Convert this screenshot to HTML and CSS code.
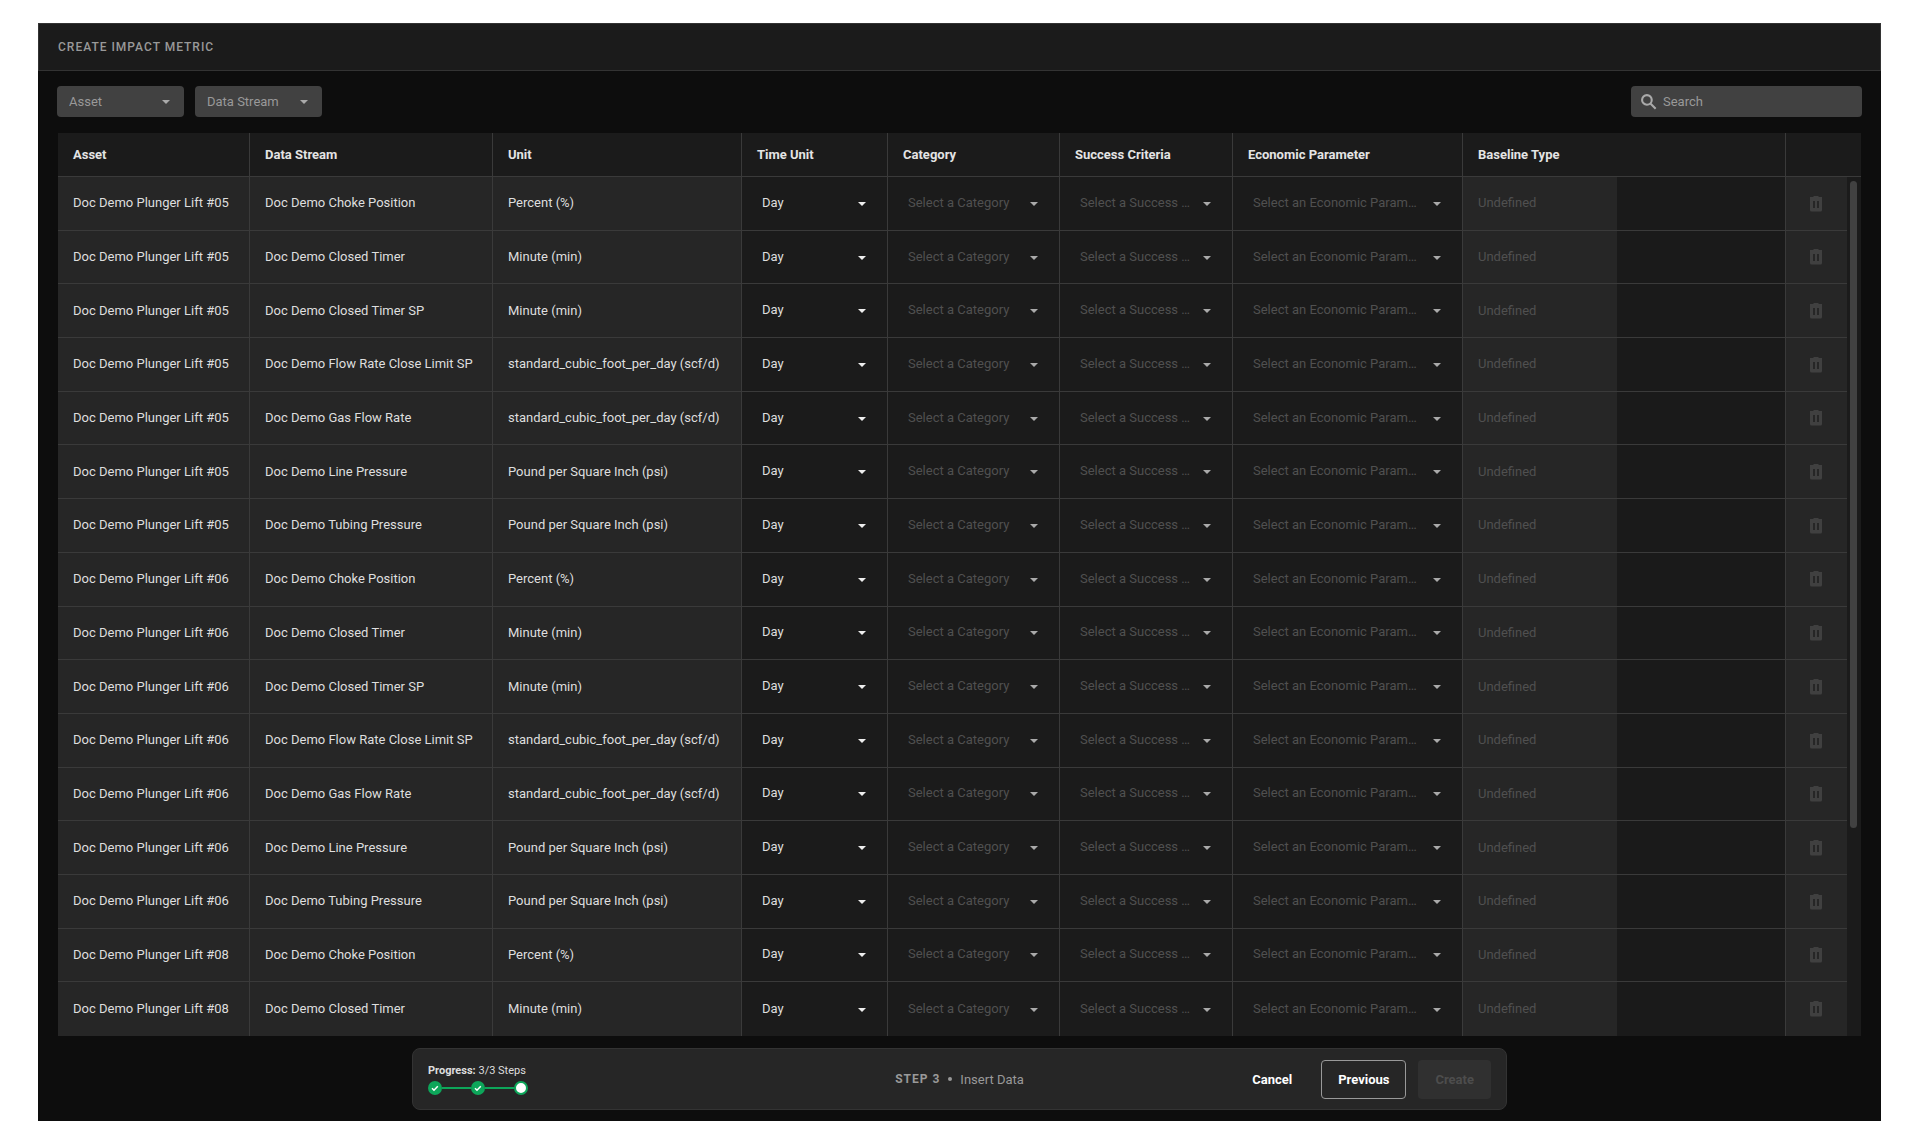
FILE: index.html
```html
<!DOCTYPE html>
<html lang="en">
<head>
    <meta charset="UTF-8">
    <meta name="viewport" content="width=device-width, initial-scale=1.0">
    <title>Create Impact Metric</title>
    <link rel="stylesheet" href="styles.css">
</head>
<body>
    <div class="page">
        <header class="page-header">
            <h1>Create Impact Metric</h1>
        </header>
        <main class="content">
            <div class="toolbar">
                <select class="filter" aria-label="Asset filter">
                    <option>Asset</option>
                </select>
                <select class="filter" aria-label="Data Stream filter">
                    <option>Data Stream</option>
                </select>
                <label class="search">
                    <svg viewBox="0 0 24 24" width="20" height="20" aria-hidden="true">
                        <path fill="none" stroke="currentColor" stroke-width="2.5" d="M9.500 3.700a5.800 5.800 0 1 0 0 11.600 5.800 5.800 0 1 0 0-11.600M14 14l6 6"/>
                    </svg>
                    <input type="text" placeholder="Search" aria-label="Search">
                </label>
            </div>
            <div class="table-wrapper">
                <table>
                    <colgroup>
                        <col class="col-asset">
                        <col class="col-stream">
                        <col class="col-unit">
                        <col class="col-time">
                        <col class="col-category">
                        <col class="col-success">
                        <col class="col-economic">
                        <col class="col-baseline">
                        <col class="col-value">
                        <col class="col-delete">
                    </colgroup>
                    <thead>
                        <tr>
                            <th>Asset</th>
                            <th>Data Stream</th>
                            <th>Unit</th>
                            <th>Time Unit</th>
                            <th>Category</th>
                            <th>Success Criteria</th>
                            <th>Economic Parameter</th>
                            <th colspan="2">Baseline Type</th>
                            <th></th>
                        </tr>
                    </thead>
                    <tbody id="metricRows"></tbody>
                </table>
                <div class="scroll-gutter">
                    <div class="scroll-head"></div>
                    <div class="scroll-track">
                        <div class="scroll-thumb"></div>
                    </div>
                </div>
            </div>
        </main>
        <footer class="wizard">
            <div class="progress">
                <div><strong>Progress:</strong> 3/3 Steps</div>
                <div class="steps">
                    <span class="step"><svg viewBox="0 0 14 14" width="14" height="14"><path d="M4 7.2l2 2 3.8-4" fill="none" stroke="#fff" stroke-width="1.5"/></svg></span>
                    <span class="line"></span>
                    <span class="step"><svg viewBox="0 0 14 14" width="14" height="14"><path d="M4 7.2l2 2 3.8-4" fill="none" stroke="#fff" stroke-width="1.5"/></svg></span>
                    <span class="line"></span>
                    <span class="step current"></span>
                </div>
            </div>
            <div class="step-title"><span class="step-number">Step 3</span> <span class="bullet"></span> Insert Data</div>
            <div class="actions">
                <button type="button" class="btn-text">Cancel</button>
                <button type="button" class="btn-outline">Previous</button>
                <button type="button" class="btn-primary" disabled>Create</button>
            </div>
        </footer>
    </div>

    <script>
        const streams = [
            ['Choke Position', 'Percent (%)'],
            ['Closed Timer', 'Minute (min)'],
            ['Closed Timer SP', 'Minute (min)'],
            ['Flow Rate Close Limit SP', 'standard_cubic_foot_per_day (scf/d)'],
            ['Gas Flow Rate', 'standard_cubic_foot_per_day (scf/d)'],
            ['Line Pressure', 'Pound per Square Inch (psi)'],
            ['Tubing Pressure', 'Pound per Square Inch (psi)']
        ];
        const assets = ['#05', '#06', '#08'];
        const visibleRows = 16;

        let html = '';
        for (let i = 0; i < visibleRows; i++) {
            const asset = assets[Math.floor(i / streams.length)];
            const [stream, unit] = streams[i % streams.length];
            html += `<tr>
                <td>Doc Demo Plunger Lift ${asset}</td>
                <td>Doc Demo ${stream}</td>
                <td>${unit}</td>
                <td class="editable"><select class="chosen" aria-label="Time Unit"><option>Day</option></select></td>
                <td class="editable"><select aria-label="Category"><option>Select a Category</option></select></td>
                <td class="editable"><select aria-label="Success Criteria"><option>Select a Success Criteria</option></select></td>
                <td class="editable"><select aria-label="Economic Parameter"><option>Select an Economic Parameter</option></select></td>
                <td class="undefined">Undefined</td>
                <td class="empty"></td>
                <td class="delete"><button type="button" aria-label="Delete row" disabled>
                    <svg viewBox="0 0 14 16" width="14" height="16"><path fill="currentColor" fill-rule="evenodd" d="M1 1h3l1-1h4l1 1h3v2H1zM1 3h12v11a1.500 1.500 0 0 1-1.500 1.500h-9A1.500 1.500 0 0 1 1 14zM4 5v7h2V5zm4 0v7h2V5z"/></svg>
                </button></td>
            </tr>`;
        }
        document.getElementById('metricRows').innerHTML = html;
    </script>
</body>
</html>
```
FILE: styles.css
```css
* {
    box-sizing: border-box;
}
body {
    margin: 0;
    padding: 23px 39px 23px 38px;
    background-color: #fff;
    color: #dedede;
    font-family: Roboto, "Liberation Sans", sans-serif;
    font-size: 13px;
}
select, input, button {
    font: inherit;
    color: inherit;
}
.page {
    display: flex;
    flex-direction: column;
    min-height: calc(100vh - 46px);
    background-color: #0d0d0d;
}
.page-header {
    display: flex;
    align-items: center;
    height: 48px;
    padding: 0 19px;
    background-color: #1b1b1b;
    border: 1px solid #333;
}
h1 {
    margin: 0;
    font-size: 12px;
    font-weight: 500;
    letter-spacing: 1px;
    text-transform: uppercase;
    color: #999;
}
.content {
    flex: 1;
    display: flex;
    flex-direction: column;
    padding: 15px 20px 12px;
}
.toolbar {
    display: flex;
    gap: 11px;
    margin: 0 -1px 16px;
}
select {
    appearance: none;
    border: none;
    background-color: transparent;
    background-image: url("data:image/svg+xml,%3Csvg xmlns='http://www.w3.org/2000/svg' width='8' height='4'%3E%3Cpath d='M0 0h8L4 4z' fill='%23aaa'/%3E%3C/svg%3E");
    background-repeat: no-repeat;
    text-overflow: ellipsis;
    overflow: hidden;
    white-space: nowrap;
}
.filter {
    width: 127px;
    height: 31px;
    padding: 0 28px 0 12px;
    border-radius: 4px;
    background-color: #414141;
    background-position: right 14px center;
    color: #999;
}
.search {
    display: flex;
    align-items: center;
    gap: 4px;
    width: 231px;
    height: 31px;
    margin-left: auto;
    padding: 0 8px;
    border-radius: 4px;
    background-color: #414141;
    color: #aaa;
}
.search input {
    flex: 1;
    min-width: 0;
    padding: 0;
    border: none;
    outline: none;
    background: none;
}
.search input::placeholder {
    color: #999;
}
.table-wrapper {
    flex: 1;
    display: flex;
}
table {
    flex: 1;
    table-layout: fixed;
    border-collapse: separate;
    border-spacing: 0;
}
.col-asset { width: 192px; }
.col-stream { width: 243px; }
.col-unit { width: 249px; }
.col-time { width: 146px; }
.col-category { width: 172px; }
.col-success { width: 173px; }
.col-economic { width: 230px; }
.col-baseline { width: 154px; }
.col-value { width: 169px; }
.col-delete { width: 61px; }
th, td {
    padding: 0 0 0 15px;
    text-align: left;
    white-space: nowrap;
    border-right: 1px solid #3a3a3a;
    border-bottom: 1px solid #3a3a3a;
}
th {
    height: 44px;
    background-color: #1b1b1b;
    font-weight: bold;
    color: #e4e4e4;
}
td {
    height: 53px;
    padding-bottom: 1px;
    background-color: #262626;
}
th:last-child, td:last-child {
    border-right: none;
}
tbody tr:last-child td {
    border-bottom: none;
}
td.editable {
    padding: 0 9px 1px 8px;
    background-color: #1b1b1b;
}
td select {
    width: 100%;
    height: 32px;
    padding: 0 32px 1px 12px;
    background-position: right 12px top 15px;
    color: #505050;
}
td .chosen {
    background-image: url("data:image/svg+xml,%3Csvg xmlns='http://www.w3.org/2000/svg' width='8' height='4'%3E%3Cpath d='M0 0h8L4 4z' fill='%23eee'/%3E%3C/svg%3E");
    color: #dedede;
}
td.undefined {
    border-right: none;
    color: #505050;
}
td.empty {
    background-color: #1a1a1a;
}
td.delete {
    padding: 0 2px 0 0;
    text-align: center;
}
.delete button {
    padding: 0;
    border: none;
    background: none;
    color: #404040;
    vertical-align: middle;
}
.delete svg {
    display: block;
}
.scroll-gutter {
    display: flex;
    flex-direction: column;
    width: 14px;
    background-color: #1b1b1b;
}
.scroll-head {
    height: 44px;
    border-bottom: 1px solid #3a3a3a;
}
.scroll-track {
    flex: 1;
    padding: 4px 4px 4px 3px;
}
.scroll-thumb {
    height: 76%;
    border-radius: 4px;
    background-color: #414141;
}
.wizard {
    display: grid;
    grid-template-columns: 1fr auto 1fr;
    align-items: center;
    align-self: center;
    width: 1095px;
    max-width: 100%;
    height: 62px;
    margin-bottom: 11px;
    padding: 0 15px;
    border: 1px solid #333;
    border-radius: 8px;
    background-color: #262626;
}
.progress {
    font-size: 11px;
}
.steps {
    display: flex;
    align-items: center;
    margin-top: 4px;
}
.step {
    width: 14px;
    height: 14px;
    border-radius: 50%;
    background-color: #0da65a;
}
.step svg {
    display: block;
}
.current {
    border: 2px solid #0da65a;
    background-color: #fff;
}
.line {
    width: 29px;
    height: 2px;
    background-color: #0da65a;
}
.step-title {
    display: flex;
    align-items: center;
    gap: 8px;
    color: #999;
}
.step-number {
    font-size: 12px;
    font-weight: bold;
    letter-spacing: 1px;
    text-transform: uppercase;
}
.bullet {
    width: 4px;
    height: 4px;
    border-radius: 50%;
    background-color: #999;
}
.actions {
    display: flex;
    justify-content: flex-end;
    gap: 12px;
}
.actions button {
    height: 39px;
    padding: 0 16px;
    border: 1px solid transparent;
    border-radius: 4px;
    background: none;
    font-weight: bold;
    color: #fff;
}
.actions .btn-outline {
    border-color: #999;
}
.actions .btn-primary {
    background-color: #303030;
    color: #4d4d4d;
}
```
